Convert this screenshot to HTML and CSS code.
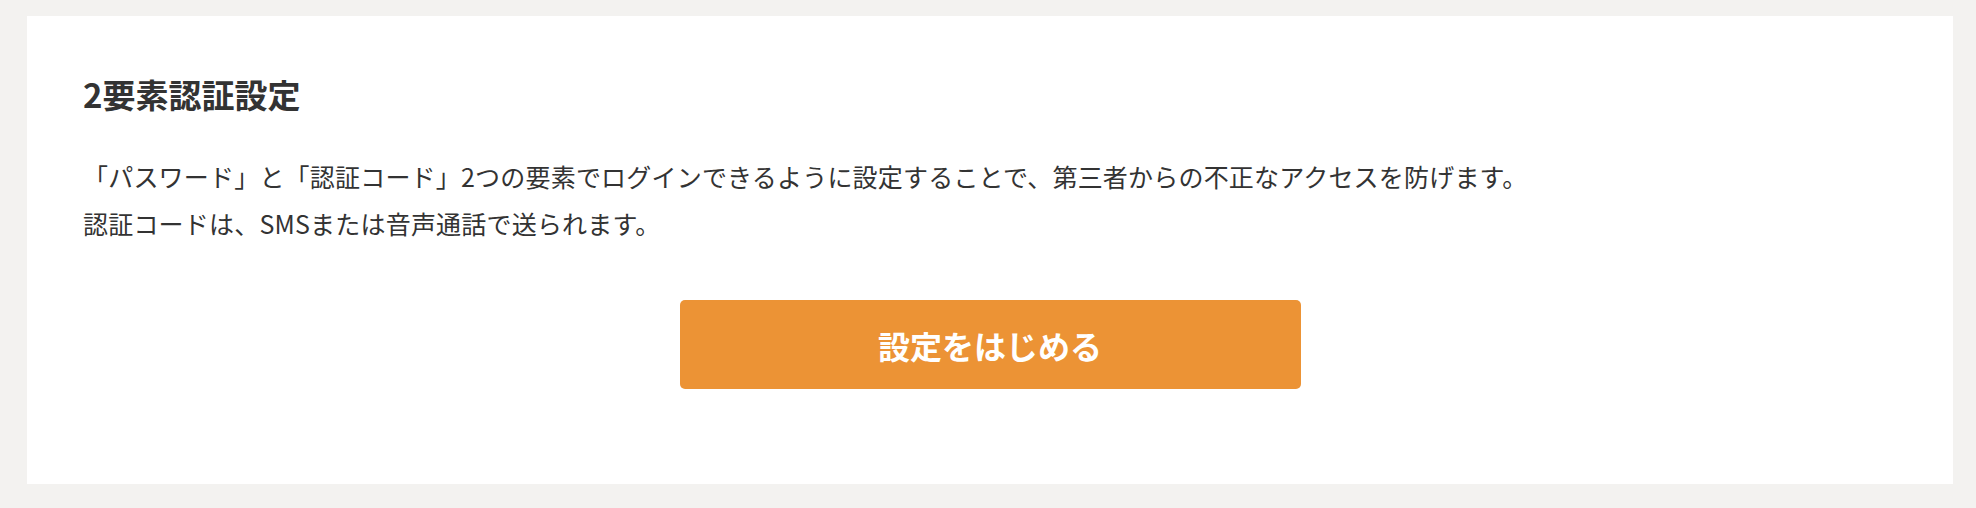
FILE: index.html
```html
<!DOCTYPE html>
<html lang="ja">
<head>
  <meta charset="UTF-8">
  <title>2要素認証設定</title>
  <link rel="stylesheet" href="styles.css">
</head>
<body>

<div class="panel">
  <h2 class="panel-title">2要素認証設定</h2>
  <p class="panel-text">
    「パスワード」と「認証コード」2つの要素でログインできるように設定することで、第三者からの不正なアクセスを防げます。<br>
    認証コードは、SMSまたは音声通話で送られます。
  </p>
  <div class="actions">
    <button class="btn-start" type="button">設定をはじめる</button>
  </div>
</div>

</body>
</html>
```

FILE: styles.css
```css
body {
  margin: 0;
  padding: 16px 23px 24px 27px;
  background-color: #f3f2f0;
  font-family: "Noto Sans CJK JP", "Noto Sans", sans-serif;
  color: #333;
}
.panel {
  background: #fff;
  padding: 54px 56px 95px;
}
.panel-title {
  margin: 0;
  font-size: 33px;
  line-height: 48px;
  font-weight: bold;
  color: #333;
}
.panel-text {
  margin: 35px 0 0;
  font-size: 25px;
  line-height: 46.5px;
  letter-spacing: 0.2px;
  color: #333;
}
.actions {
  display: flex;
  justify-content: center;
  margin-top: 54px;
}
.btn-start {
  width: 621px;
  height: 89px;
  border: none;
  border-radius: 5px;
  background-color: #ec9335;
  color: #fff;
  font-family: inherit;
  font-size: 32px;
  font-weight: bold;
  cursor: pointer;
}
.btn-start:hover {
  background-color: #e0842a;
}
```
